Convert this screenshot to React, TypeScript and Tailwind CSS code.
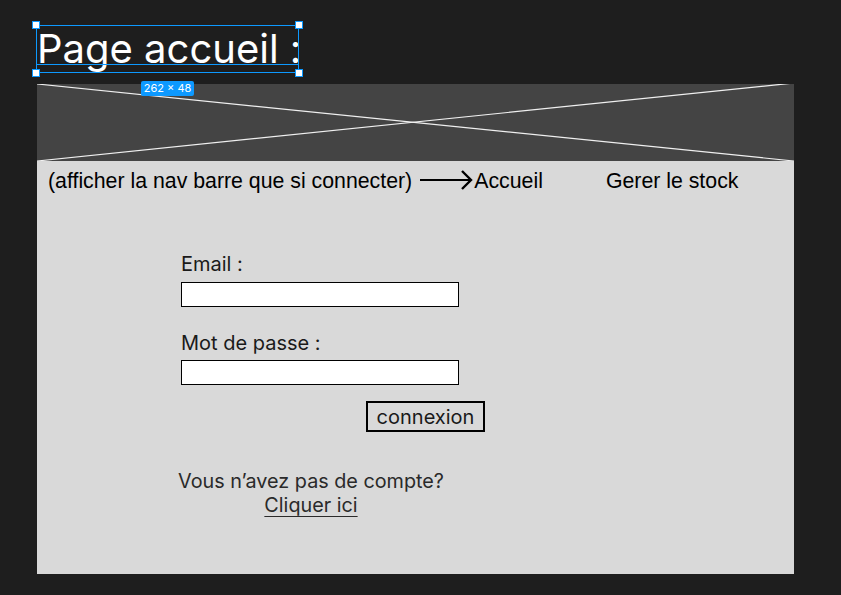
import React from "react";

export default function App() {
  return (
    <div className="relative w-[841px] h-[595px] bg-[#1e1e1e] overflow-hidden" style={{ fontFamily: "Inter, 'Noto Sans', sans-serif" }}>
      {/* Title with selection */}
      <div className="absolute left-[36px] top-[25px] w-[263px] h-[48px]">
        <div className="text-[40px] leading-[48px] text-white whitespace-nowrap pl-[1px]">Page accueil :</div>
        <div className="absolute inset-0 border border-[#0d99ff]" />
        <div className="absolute left-0 right-0 top-[39px] h-px bg-[#0d99ff]" />
        <div className="absolute -left-[4px] -top-[4px] w-[8px] h-[8px] bg-white border border-[#0d99ff]" />
        <div className="absolute -right-[4px] -top-[4px] w-[8px] h-[8px] bg-white border border-[#0d99ff]" />
        <div className="absolute -left-[4px] -bottom-[4px] w-[8px] h-[8px] bg-white border border-[#0d99ff]" />
        <div className="absolute -right-[4px] -bottom-[4px] w-[8px] h-[8px] bg-white border border-[#0d99ff]" />
      </div>

      {/* Frame */}
      <div className="absolute left-[37px] top-[84px] w-[757px] h-[490px] flex flex-col">
        <div className="h-[77px] bg-[#444444] relative">
          <svg className="absolute inset-0" width="757" height="77" viewBox="0 0 757 77">
            <line x1="0" y1="0" x2="757" y2="77" stroke="#f0f0f0" strokeWidth="1.2" />
            <line x1="757" y1="-1" x2="0" y2="77" stroke="#f0f0f0" strokeWidth="1.2" />
          </svg>
        </div>
        <div className="flex-1 bg-[#d9d9d9] flex flex-col">
          {/* Nav */}
          <div className="flex items-center pt-[8px] pl-[11px] text-[21.3px] leading-[24px] text-black whitespace-nowrap" style={{ fontFamily: "'Liberation Sans', Arial, sans-serif" }}>
            <span>(afficher la nav barre que si connecter)</span>
            <svg width="53" height="22" viewBox="0 0 53 22" className="ml-[8px] mt-[-2px]">
              <line x1="0" y1="11" x2="50" y2="11" stroke="black" strokeWidth="2.2" />
              <polyline points="42,2 51,11 42,20" fill="none" stroke="black" strokeWidth="2.4" />
            </svg>
            <span className="ml-[1px]">Accueil</span>
            <span className="ml-[63px]">Gerer le stock</span>
          </div>

          {/* Form */}
          <div className="ml-[144px] mt-[59px] flex flex-col text-[20px] leading-[24px] text-[#1a1a1a]">
            <div>Email :</div>
            <div className="mt-[6px] w-[278px] h-[25px] bg-white border border-black" />
            <div className="mt-[24px]">Mot de passe :</div>
            <div className="mt-[5px] w-[278px] h-[25px] bg-white border border-black" />
            <div className="mt-[16px] ml-[185px] w-[119px] h-[31px] border-2 border-black flex items-center justify-center">
              connexion
            </div>
          </div>

          <div className="ml-[134px] w-[280px] mt-[37px] flex flex-col items-center text-[19.8px] leading-[24px] text-[#2a2a2a] whitespace-nowrap">
            <div>Vous n’avez pas de compte?</div>
            <div className="underline underline-offset-[4px] decoration-[1px]">Cliquer ici</div>
          </div>
        </div>
      </div>

      {/* Size badge */}
      <div className="absolute left-[141px] top-[81px] w-[53px] h-[15px] rounded-[2px] bg-[#0d99ff] text-white text-[11px] leading-[15px] text-center">
        262 × 48
      </div>
    </div>
  );
}
